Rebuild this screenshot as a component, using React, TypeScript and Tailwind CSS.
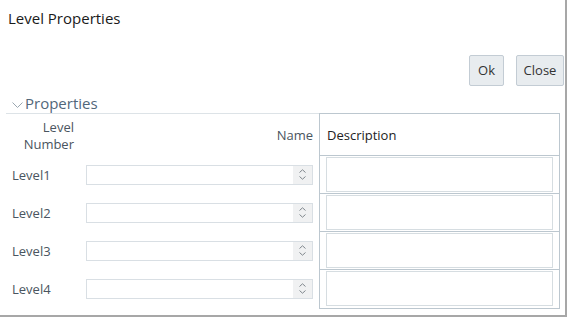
const font = { fontFamily: '"Open Sans", "Noto Sans", sans-serif' };

function Spinner() {
  return (
    <div className="flex h-full w-[19px] flex-col items-center justify-center gap-[3px] bg-[#f0f1f2]">
      <svg width="7" height="4" viewBox="0 0 7 4" fill="none">
        <path d="M0.5 3.5L3.5 0.8L6.5 3.5" stroke="#7f868c" strokeWidth="1" />
      </svg>
      <svg width="7" height="4" viewBox="0 0 7 4" fill="none">
        <path d="M0.5 0.5L3.5 3.2L6.5 0.5" stroke="#7f868c" strokeWidth="1" />
      </svg>
    </div>
  );
}

function LevelRow({ label }: { label: string }) {
  return (
    <div className="flex h-[38px] items-center">
      <div className="w-[80px] pl-[6px] pt-[3px] text-[13px] text-[#4a5560]">{label}</div>
      <div className="mt-[1px] flex h-[20px] w-[227px] items-stretch justify-end border border-[#d9dfe4] bg-white">
        <Spinner />
      </div>
    </div>
  );
}

function DescRow({ last }: { last?: boolean }) {
  return (
    <div className={`h-[38px] px-[6px] pt-[1px] ${last ? '' : 'border-b border-[#bcc7cf]'}`}>
      <div className="h-[35px] w-[227px] border border-[#d6dde1] bg-white" />
    </div>
  );
}

export default function App() {
  const levels = ['Level1', 'Level2', 'Level3', 'Level4'];
  return (
    <div
      className="h-[317px] w-[567px] overflow-hidden border-r-2 border-b-2 border-[#a7a7a7] bg-white"
      style={font}
    >
      <div className="pl-[8px] pt-[8px] text-[15px] leading-[20px] text-[#1a1a1a]">Level Properties</div>

      <div className="mt-[27px] flex justify-end gap-[12px] pr-[1px]">
        <button className="h-[31px] w-[35px] rounded-[2px] border border-[#c3ccd4] bg-[#e8ecef] text-[13px] text-[#333]">
          Ok
        </button>
        <button className="h-[31px] w-[48px] rounded-[2px] border border-[#c3ccd4] bg-[#e8ecef] text-[13px] text-[#333]">
          Close
        </button>
      </div>

      <div className="mt-[7px] flex h-[20px] items-center pl-[12px] text-[15px] leading-[20px] text-[#52677a]">
        <svg width="11" height="7" viewBox="0 0 11 7" fill="none" className="mt-[4px] mr-[2px]">
          <path d="M0.5 0.5L5.5 5.5L10.5 0.5" stroke="#9aa6b0" strokeWidth="1" />
        </svg>
        Properties
      </div>

      <div className="ml-[6px] flex">
        <div className="w-[313px] border-t border-[#dde3e7]">
          <div className="flex h-[41px] items-center pt-[2px] text-[13px] text-[#4a5560]">
            <div className="w-[80px] pr-[12px] text-right leading-[17px]">
              Level
              <br />
              Number
            </div>
            <div className="w-[227px] text-right">Name</div>
          </div>
          {levels.map((l) => (
            <LevelRow key={l} label={l} />
          ))}
        </div>
        <div className="w-[241px] border border-[#bcc7cf]">
          <div className="flex h-[42px] items-center border-b border-[#bcc7cf] pl-[7px] pt-[2px] text-[13px] text-[#222]">
            Description
          </div>
          {levels.map((l, i) => (
            <DescRow key={l} last={i === levels.length - 1} />
          ))}
        </div>
      </div>
    </div>
  );
}
